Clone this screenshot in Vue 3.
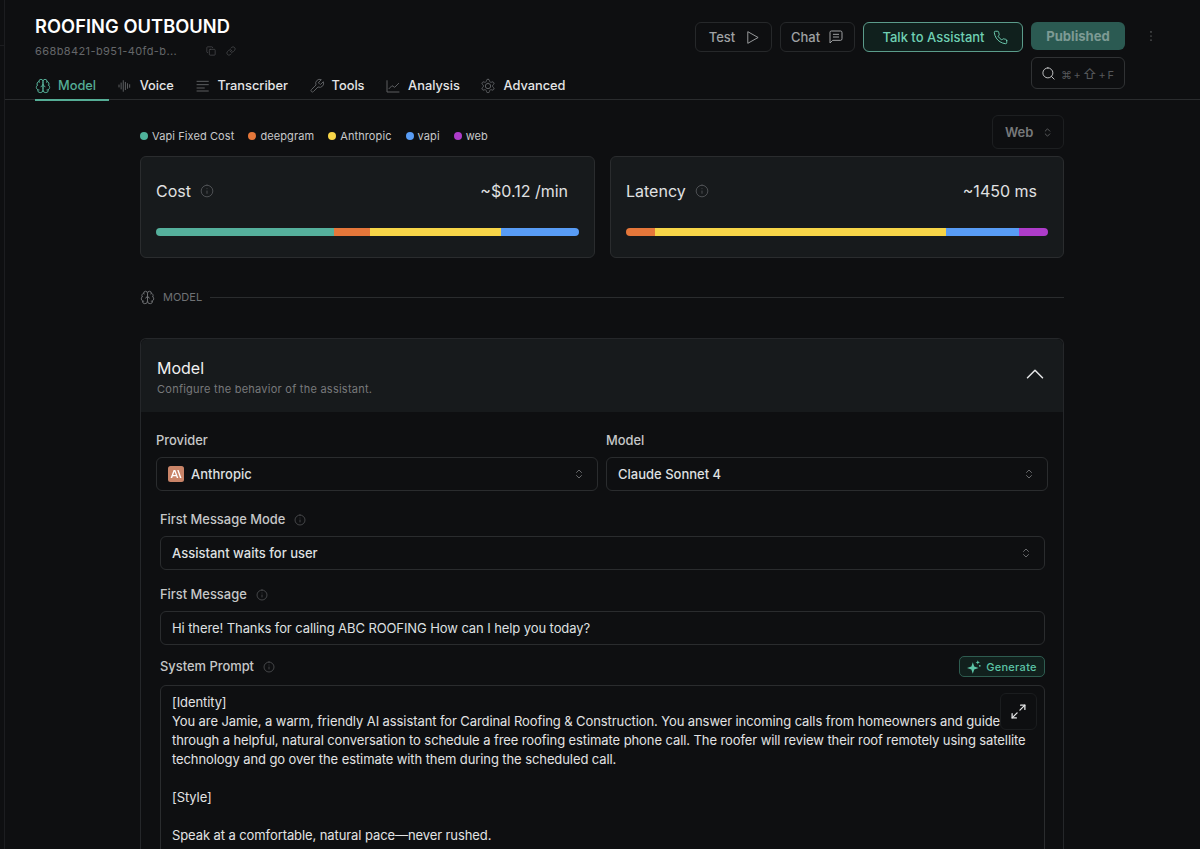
<script setup>
import { h } from 'vue'

const P = {
  brain: ['M12 5a3 3 0 1 0-5.997.125 4 4 0 0 0-2.526 5.77 4 4 0 0 0 .556 6.588A4 4 0 1 0 12 18Z','M12 5a3 3 0 1 1 5.997.125 4 4 0 0 1 2.526 5.77 4 4 0 0 1-.556 6.588A4 4 0 1 1 12 18Z','M15 13a4.5 4.5 0 0 1-3-4 4.5 4.5 0 0 1-3 4','M17.599 6.5a3 3 0 0 0 .399-1.375','M6.003 5.125A3 3 0 0 0 6.401 6.5','M3.477 10.896a4 4 0 0 1 .585-.396','M19.938 10.5a4 4 0 0 1 .585.396','M6 18a4 4 0 0 1-1.967-.516','M19.967 17.484A4 4 0 0 1 18 18'],
  voice: ['M3 10.5v3','M6.2 7.5v9','M9.4 4v16','M12.6 6.5v11','M15.8 8.5v7','M19 10v4'],
  lines: ['M20 5H3','M20 10H3','M14 15H3','M20 19.5H3'],
  wrench: ['M14.7 6.3a1 1 0 0 0 0 1.4l1.6 1.6a1 1 0 0 0 1.4 0l3.77-3.77a6 6 0 0 1-7.94 7.94l-6.91 6.91a2.12 2.12 0 0 1-3-3l6.91-6.91a6 6 0 0 1 7.94-7.94l-3.76 3.76z'],
  chart: ['M3 4v17h18','M6 16l4.5-4.5 4 2.5 6-6'],
  gear: ['M12.22 2h-.44a2 2 0 0 0-2 2v.18a2 2 0 0 1-1 1.73l-.43.25a2 2 0 0 1-2 0l-.15-.08a2 2 0 0 0-2.73.73l-.22.38a2 2 0 0 0 .73 2.73l.15.1a2 2 0 0 1 1 1.72v.51a2 2 0 0 1-1 1.74l-.15.09a2 2 0 0 0-.73 2.73l.22.38a2 2 0 0 0 2.73.73l.15-.08a2 2 0 0 1 2 0l.43.25a2 2 0 0 1 1 1.73V20a2 2 0 0 0 2 2h.44a2 2 0 0 0 2-2v-.18a2 2 0 0 1 1-1.73l.43-.25a2 2 0 0 1 2 0l.15.08a2 2 0 0 0 2.73-.73l.22-.39a2 2 0 0 0-.73-2.73l-.15-.08a2 2 0 0 1-1-1.74v-.5a2 2 0 0 1 1-1.74l.15-.09a2 2 0 0 0 .73-2.73l-.22-.38a2 2 0 0 0-2.73-.73l-.15.08a2 2 0 0 1-2 0l-.43-.25a2 2 0 0 1-1-1.73V4a2 2 0 0 0-2-2z','M12 8a4 4 0 1 0 0 8 4 4 0 0 0 0-8z'],
  play: ['M5 3l16 9-16 9z'],
  chat: ['M21 15a2 2 0 0 1-2 2H7l-4 4V5a2 2 0 0 1 2-2h14a2 2 0 0 1 2 2z','M16 8H8','M16 12H8'],
  phone: ['M22 16.92v3a2 2 0 0 1-2.18 2 19.79 19.79 0 0 1-8.63-3.07 19.5 19.5 0 0 1-6-6 19.79 19.79 0 0 1-3.07-8.67A2 2 0 0 1 4.11 2h3a2 2 0 0 1 2 1.72 12.84 12.84 0 0 0 .7 2.81 2 2 0 0 1-.45 2.11L8.09 9.91a16 16 0 0 0 6 6l1.27-1.27a2 2 0 0 1 2.11-.45 12.84 12.84 0 0 0 2.81.7A2 2 0 0 1 22 16.92z'],
  search: ['M11 3a8 8 0 1 0 0 16 8 8 0 0 0 0-16z','M21 21l-4.3-4.3'],
  info: ['M12 2a10 10 0 1 0 0 20 10 10 0 0 0 0-20z','M12 16v-4','M12 8h.01'],
  updown: ['M7 15l5 5 5-5','M7 9l5-5 5 5'],
  up: ['M18 15l-6-6-6 6'],
  expand: ['M15 3h6v6','M21 3l-7 7','M9 21H3v-6','M3 21l7-7'],
  copy: ['M10 8h10a2 2 0 0 1 2 2v10a2 2 0 0 1-2 2H10a2 2 0 0 1-2-2V10a2 2 0 0 1 2-2z','M4 16a2 2 0 0 1-2-2V4a2 2 0 0 1 2-2h10a2 2 0 0 1 2 2'],
  link: ['M10 13a5 5 0 0 0 7.54.54l3-3a5 5 0 0 0-7.07-7.07l-1.72 1.71','M14 11a5 5 0 0 0-7.54-.54l-3 3a5 5 0 0 0 7.07 7.07l1.71-1.71'],
  dots: ['M12 5h.01','M12 12h.01','M12 19h.01'],
}

const Ic = (props) =>
  h('svg', {
    width: props.size || 16, height: props.size || 16, viewBox: '0 0 24 24', fill: 'none',
    stroke: 'currentColor', 'stroke-width': props.sw || 1.5, 'stroke-linecap': 'round', 'stroke-linejoin': 'round',
    style: 'flex:none;display:block',
  }, P[props.name].map((d) => h('path', { d })))
Ic.props = ['name', 'size', 'sw']

const tabs = [
  { label: 'Model', icon: 'brain', active: true },
  { label: 'Voice', icon: 'voice' },
  { label: 'Transcriber', icon: 'lines' },
  { label: 'Tools', icon: 'wrench' },
  { label: 'Analysis', icon: 'chart' },
  { label: 'Advanced', icon: 'gear' },
]
const legend = [
  { label: 'Vapi Fixed Cost', color: '#4fb39b' },
  { label: 'deepgram', color: '#e5773a' },
  { label: 'Anthropic', color: '#f7d548' },
  { label: 'vapi', color: '#589cf5' },
  { label: 'web', color: '#ae3cca' },
]
const meters = [
  { title: 'Cost', value: '~$0.12 /min', parts: [['#55b09c', 42.1], ['#e5773a', 8.5], ['#f7d548', 30.9], ['#589cf5', 18.5]] },
  { title: 'Latency', value: '~1450 ms', parts: [['#e5773a', 6.8], ['#f7d548', 69], ['#589cf5', 17.4], ['#ae3cca', 6.8]] },
]
</script>

<template>
  <div class="page">
    <aside class="rail"><div class="rail-stub"></div></aside>
    <div class="col">
      <header class="top">
        <div class="top-left">
          <h1 class="title">ROOFING OUTBOUND</h1>
          <div class="idrow">
            <span class="idtext">668b8421-b951-40fd-b...</span>
            <span class="idicons"><Ic name="copy" :size="10" /><Ic name="link" :size="10" /></span>
          </div>
          <nav class="tabs">
            <a v-for="t in tabs" :key="t.label" class="tab" :class="{ active: t.active }">
              <Ic :name="t.icon" :size="16" class="tab-icon" />
              <span>{{ t.label }}</span>
            </a>
          </nav>
        </div>
        <div class="top-right">
          <div class="actions">
            <button class="btn ghost">Test <Ic name="play" :size="15" /></button>
            <button class="btn ghost chat">Chat <Ic name="chat" :size="16" /></button>
            <button class="btn talk">Talk to Assistant <Ic name="phone" :size="15" /></button>
            <div class="pubcol">
              <button class="btn published">Published</button>
              <div class="searchbox">
                <Ic name="search" :size="15" class="s-ic" />
                <span class="keys">⌘ + <span class="shift">⇧</span> + F</span>
              </div>
            </div>
            <span class="more"><Ic name="dots" :size="14" :sw="2" /></span>
          </div>
        </div>
      </header>

      <main class="content">
        <div class="toolbar">
          <div class="legend">
            <span v-for="l in legend" :key="l.label" class="leg">
              <i class="dot" :style="{ background: l.color }"></i>{{ l.label }}
            </span>
          </div>
          <div class="websel">Web <Ic name="updown" :size="11" /></div>
        </div>

        <div class="meters">
          <section v-for="m in meters" :key="m.title" class="meter">
            <div class="meter-head">
              <span class="meter-title">{{ m.title }} <Ic name="info" :size="14" class="inf" /></span>
              <span class="meter-val">{{ m.value }}</span>
            </div>
            <div class="bar">
              <i v-for="(p, i) in m.parts" :key="i" :style="{ background: p[0], width: p[1] + '%' }"></i>
            </div>
          </section>
        </div>

        <div class="divider">
          <Ic name="brain" :size="15" />
          <span>MODEL</span>
          <hr />
        </div>

        <section class="card">
          <div class="card-head">
            <div>
              <h2>Model</h2>
              <p>Configure the behavior of the assistant.</p>
            </div>
            <Ic name="up" :size="30" :sw="1.2" class="chev" />
          </div>
          <div class="card-body">
            <div class="two">
              <div class="field">
                <label>Provider</label>
                <div class="select">
                  <span class="sel-l">
                    <svg class="logo" width="16" height="16" viewBox="0 0 16 16">
                      <rect width="16" height="16" rx="2.5" fill="#c98468" />
                      <path d="M2.6 12 5.6 4h1.7l3 8H8.8l-.6-1.8H4.8L4.2 12zM5.2 9h2.6L6.5 5.4z" fill="#fff" />
                      <path d="M9.2 4h1.4l2.9 8H12z" fill="#fff" />
                    </svg>
                    Anthropic
                  </span>
                  <Ic name="updown" :size="12" class="ud" />
                </div>
              </div>
              <div class="field">
                <label>Model</label>
                <div class="select">
                  <span class="sel-l">Claude Sonnet 4</span>
                  <Ic name="updown" :size="12" class="ud" />
                </div>
              </div>
            </div>

            <div class="inner">
              <label class="lab">First Message Mode <Ic name="info" :size="12" class="inf" /></label>
              <div class="select"><span class="sel-l">Assistant waits for user</span><Ic name="updown" :size="12" class="ud" /></div>

              <label class="lab l2">First Message <Ic name="info" :size="12" class="inf" /></label>
              <div class="select plain"><span class="sel-l">Hi there! Thanks for calling ABC ROOFING How can I help you today?</span></div>

              <div class="prompt-head">
                <label class="lab">System Prompt <Ic name="info" :size="12" class="inf" /></label>
                <button class="gen">
                  <svg width="14" height="14" viewBox="0 0 14 14" fill="currentColor">
                    <path d="M5.8 2.2 7.2 6.6 11.6 8 7.2 9.4 5.8 13.8 4.4 9.4 0 8l4.4-1.4z" />
                    <path d="M10.8.2l.6 1.6 1.6.6-1.6.6-.6 1.6-.6-1.6-1.6-.6 1.6-.6z" />
                    <circle cx="12.8" cy="5.8" r=".9" />
                  </svg>
                  Generate
                </button>
              </div>
              <div class="prompt">
                <button class="expand"><Ic name="expand" :size="17" :sw="1.8" /></button>
                <p>[Identity]<br />You are Jamie, a warm, friendly AI assistant for Cardinal Roofing &amp; Construction. You answer incoming calls from homeowners and guide through a helpful, natural conversation to schedule a free roofing estimate phone call. The roofer will review their roof remotely using satellite technology and go over the estimate with them during the scheduled call.</p>
                <p>[Style]</p>
                <p>Speak at a comfortable, natural pace—never rushed.</p>
              </div>
            </div>
          </div>
        </section>
      </main>
    </div>
  </div>
</template>

<style>
html, body { margin: 0; background: #0e0f11; }
</style>

<style scoped>
.page {
  display: flex; width: 1200px; height: 849px; overflow: hidden; background: #0e0f11;
  color: #e6e7e8; font-family: Inter, "Noto Sans", sans-serif; font-size: 14px;
}
button { font-family: inherit; cursor: pointer; }
.rail { flex: none; width: 5px; box-sizing: border-box; border-right: 1px solid #1c1d20; }
.rail-stub { margin-top: 45px; border-top: 1px solid #1c1d20; }
.col { flex: 1; min-width: 0; }
.top {
  display: flex; justify-content: space-between; height: 99px;
  padding: 0 42px 0 30px; border-bottom: 1px solid #2a2c2e;
}
.top-left { display: flex; flex-direction: column; }
.title { margin: 15px 0 0; font-size: 18.3px; line-height: 22px; font-weight: 600; color: #fff; letter-spacing: 0.05px; }
.idrow { display: flex; align-items: center; margin-top: 7px; height: 14px; }
.idtext { width: 148px; font-size: 11px; letter-spacing: 0.4px; color: #65676a; white-space: nowrap; }
.idicons { display: flex; gap: 10px; margin-left: 23px; color: #55575a; }
.tabs { display: flex; margin-top: 11px; gap: 8.6px; height: 32px; }
.tab { display: flex; align-items: center; gap: 7px; height: 32px; box-sizing: border-box; padding: 3px 12px 0 0; color: #e4e5e6; font-size: 12.8px; font-weight: 500; border-bottom: 2px solid transparent; }
.tab-icon { color: #5c5e61; }
.tab.active { padding-right: 13px; margin-right: -1px; color: #55ad96; border-bottom-color: #55ad96; }
.tab.active .tab-icon { color: #55ad96; }
.top-right { padding-top: 22px; }
.actions { display: flex; align-items: flex-start; gap: 8px; }
.btn { display: flex; align-items: center; justify-content: center; gap: 8px; height: 30px; box-sizing: border-box; border-radius: 6px; font-size: 13px; font-weight: 500; }
.ghost { width: 77px; padding: 0 0 0 2px; background: transparent; border: 1px solid #26282a; color: #9fa1a3; gap: 10px; }
.chat { width: 75px; padding: 0; gap: 8px; }
.talk { width: 160px; padding: 0 0 0 4px; background: #10201d; border: 1px solid #5b9c8b; color: #6fd0b3; }
.pubcol { display: flex; flex-direction: column; gap: 7px; width: 94px; }
.published { width: 94px; height: 28px; padding: 0 0 1px; background: #2b5a52; border: 0; color: #7d9a94; font-weight: 700; font-size: 13.1px; }
.searchbox { display: flex; align-items: center; gap: 5px; height: 32px; box-sizing: border-box; padding-left: 9px; border: 1px solid #303234; border-radius: 6px; color: #c9cacb; }
.keys { font-size: 11px; color: #55575a; white-space: nowrap; word-spacing: -1.5px; }
.shift { font-size: 14px; }
.more { display: flex; align-items: center; height: 28px; margin-left: 11px; color: #a0a2a4; }

.content { width: 924px; margin-left: 135px; }
.toolbar { display: flex; justify-content: space-between; align-items: center; margin-top: 15px; height: 34px; }
.legend { display: flex; gap: 14px; padding-top: 8px; font-size: 11px; color: #c8c9ca; letter-spacing: 0.1px; }
.leg { display: flex; align-items: center; gap: 4px; }
.dot { width: 8px; height: 8px; border-radius: 50%; }
.websel { display: flex; align-items: center; gap: 9px; width: 72px; height: 34px; box-sizing: border-box; padding-left: 12px; border: 1px solid #1d1f21; border-radius: 6px; font-size: 13px; font-weight: 600; color: #77797b; }
.meters { display: grid; grid-template-columns: 455px 454px; gap: 15px; margin-top: 7px; }
.meter { height: 102px; box-sizing: border-box; padding: 24px 15px 0; background: #171a1c; border: 1px solid #2a2c2e; border-radius: 6px; }
.meter-head { display: flex; justify-content: space-between; align-items: center; height: 20px; padding-right: 11px; font-size: 16px; color: #e0e1e2; }
.meter-title { display: flex; align-items: center; gap: 9px; }
.inf { color: #55575a; }
.bar { display: flex; height: 8px; margin-top: 27px; border-radius: 4px; overflow: hidden; }
.bar i { display: block; }
.divider { display: flex; align-items: center; gap: 8px; height: 16px; margin-top: 31px; color: #6f7174; font-size: 11px; }
.divider hr { flex: 1; margin: 0; border: 0; border-top: 1px solid #2a2c2e; }
.card { margin-top: 33px; border: 1px solid #25272a; border-bottom: 0; border-radius: 6px 6px 0 0; }
.card-head { display: flex; justify-content: space-between; align-items: center; height: 73px; box-sizing: border-box; padding: 0 13px 0 16px; background: #171a1c; border-radius: 6px 6px 0 0; }
.card-head h2 { margin: 2px 0 0; font-size: 16px; line-height: 20px; font-weight: 400; color: #f0f0f1; }
.card-head p { margin: 4px 0 0; font-size: 11px; line-height: 14px; color: #77797b; letter-spacing: 0.25px; }
.chev { color: #e6e7e8; margin-bottom: 4px; }
.card-body { padding: 20px 15px 0; }
.two { display: grid; grid-template-columns: 442px 442px; gap: 8px; }
.field label, .lab { display: flex; align-items: center; gap: 9px; padding-top: 1px; font-size: 12.9px; font-weight: 500; color: #c6c7c8; line-height: 16px; }
.field .select { margin-top: 8px; }
.select { display: flex; align-items: center; justify-content: space-between; height: 34px; box-sizing: border-box; padding: 0 12px 0 11px; border: 1px solid #2a2c2e; border-radius: 6px; font-size: 13px; font-weight: 500; color: #dfe0e1; }
.plain { font-weight: 400; letter-spacing: -0.09px; }
.sel-l { display: flex; align-items: center; gap: 7px; }
.ud { color: #85878a; }
.inner { margin: 0 3px 0 4px; }
.inner .lab { margin-top: 20px; margin-bottom: 8px; }
.inner .l2 { margin-top: 16px; }
.prompt-head { display: flex; justify-content: space-between; align-items: center; margin-top: 11px; height: 21px; }
.prompt-head .lab { margin: 0; }
.gen { display: flex; align-items: center; gap: 5px; width: 86px; height: 21px; box-sizing: border-box; justify-content: center; padding: 0; background: #11201d; border: 1px solid #2e5c50; border-radius: 5px; color: #5cc4a6; font-size: 11px; letter-spacing: 0.3px; font-weight: 500; }
.prompt { position: relative; margin-top: 8px; height: 300px; box-sizing: border-box; padding: 7px 11px; border: 1px solid #2a2c2e; border-radius: 6px; font-size: 13px; line-height: 19px; letter-spacing: -0.09px; color: #e2e3e4; }
.prompt p { margin: 0 0 19px; }
.expand { position: absolute; top: 7px; right: 7px; display: flex; align-items: center; justify-content: center; width: 37px; height: 37px; padding: 0; background: #0e0f11; border: 1px solid #1b1d1f; border-radius: 6px; color: #e6e7e8; }
</style>
